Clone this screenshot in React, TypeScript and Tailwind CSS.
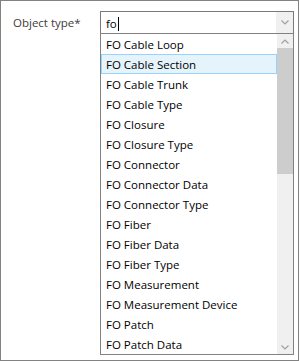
import { useState } from 'react';

const OPTIONS = [
  'FO Cable Loop',
  'FO Cable Section',
  'FO Cable Trunk',
  'FO Cable Type',
  'FO Closure',
  'FO Closure Type',
  'FO Connector',
  'FO Connector Data',
  'FO Connector Type',
  'FO Fiber',
  'FO Fiber Data',
  'FO Fiber Type',
  'FO Measurement',
  'FO Measurement Device',
  'FO Patch',
  'FO Patch Data',
];

function Chevron({ up = false }: { up?: boolean }) {
  return (
    <svg width="8" height="5" viewBox="0 0 8 5" className={up ? 'rotate-180' : ''}>
      <path d="M0.5 0.5L4 4L7.5 0.5" fill="none" stroke="#a0a0a0" strokeWidth="1.2" />
    </svg>
  );
}

export default function App() {
  const [query] = useState('fo');
  const [selected] = useState(1);

  return (
    <div
      className="h-[361px] w-[300px] bg-white"
      style={{ fontFamily: '"Open Sans", "Noto Sans", sans-serif' }}
    >
      <div className="h-[361px] w-[299px] border border-[#828282] pt-[10px] text-[11.5px]">
        <div className="flex items-start">
          {/* Label */}
          <div className="w-[99px] pl-3 pt-[3px] leading-[18px] text-[#3c3c3c]">Object type*</div>

          {/* Combo box */}
          <div className="relative w-[194px]">
            <div className="flex h-[23px] items-stretch border border-[#7a7a7a] bg-white">
              <div className="flex flex-1 items-center pl-[5px] pt-[2px] leading-none text-black">
                {query}
                <span className="ml-[1px] inline-block h-[14px] w-px bg-black" />
              </div>
              <div className="flex w-[17px] items-center justify-center bg-[#f0f0f0]">
                <Chevron />
              </div>
            </div>

            {/* Dropdown */}
            <div className="absolute left-0 top-[22px] z-10 flex h-[322px] w-[194px] border border-[#828282] bg-white">
              <ul className="flex-1">
                {OPTIONS.map((opt, i) => (
                  <li
                    key={opt}
                    className={`flex h-[20px] items-center pt-[2px] leading-none text-black ${
                      i === selected ? 'border border-[#99d1ff] bg-[#e5f3fb] pl-[4px]' : 'pl-[5px]'
                    }`}
                  >
                    {opt}
                  </li>
                ))}
              </ul>
              {/* Scrollbar */}
              <div className="flex w-[16px] flex-col bg-[#f0f0f0]">
                <div className="flex h-[14px] items-center justify-center">
                  <Chevron up />
                </div>
                <div className="h-[126px] bg-[#cdcdcd]" />
                <div className="flex-1" />
                <div className="flex h-[14px] items-center justify-center">
                  <Chevron />
                </div>
              </div>
            </div>
          </div>
        </div>
      </div>
    </div>
  );
}
